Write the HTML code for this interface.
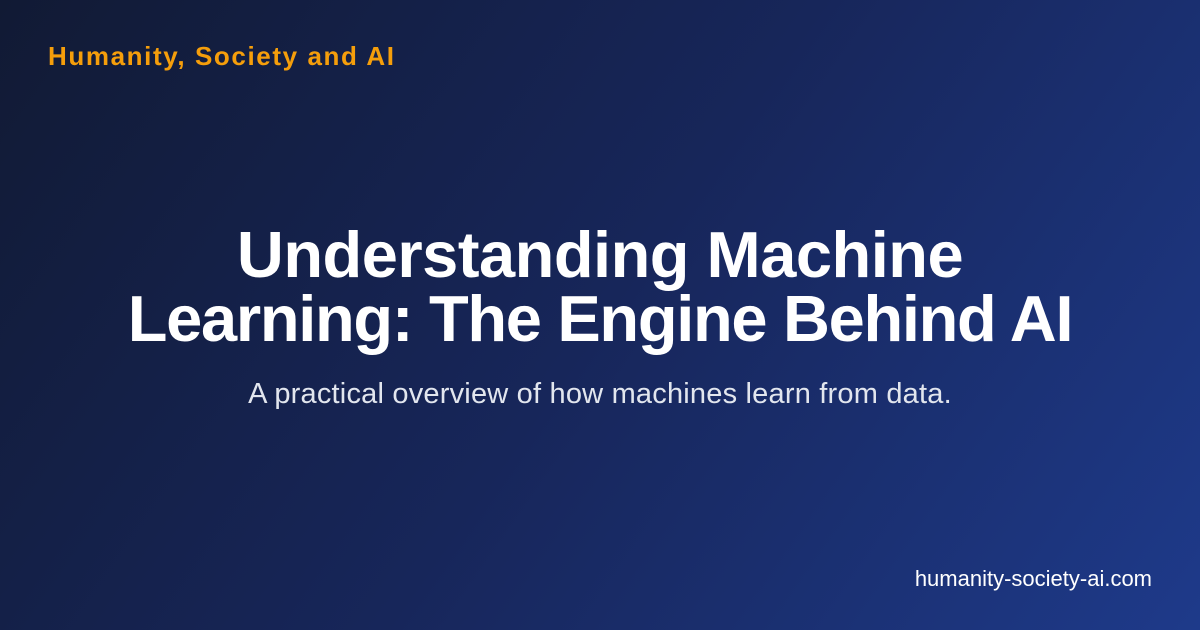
<!DOCTYPE html>
<html><head><meta charset="utf-8"><style>
html,body{margin:0;padding:0}
body{width:1200px;height:630px;overflow:hidden;position:relative;
background:linear-gradient(125deg,#111a34 0%,#17265a 50%,#1e3a8a 100%);
font-family:"Liberation Sans","DejaVu Sans",sans-serif;}
.brand{position:absolute;left:48px;top:41px;color:#f59e0b;font-weight:700;font-size:26px;letter-spacing:1.6px}
.title{position:absolute;left:0;width:1200px;top:223px;text-align:center;color:#fff;font-weight:700;font-size:65px;line-height:64px;letter-spacing:-0.5px}
.title span{letter-spacing:-1.3px}
.sub{position:absolute;left:0;width:1200px;top:376px;text-align:center;color:#e2e6ee;font-size:29px;line-height:36px;letter-spacing:0.2px}
.url{position:absolute;right:48px;top:566px;color:#fff;font-size:22px}
</style></head><body>
<div class="brand">Humanity, Society and AI</div>
<div class="title">Understanding Machine<br><span>Learning: The Engine Behind AI</span></div>
<div class="sub">A practical overview of how machines learn from data.</div>
<div class="url">humanity-society-ai.com</div>
</body></html>
